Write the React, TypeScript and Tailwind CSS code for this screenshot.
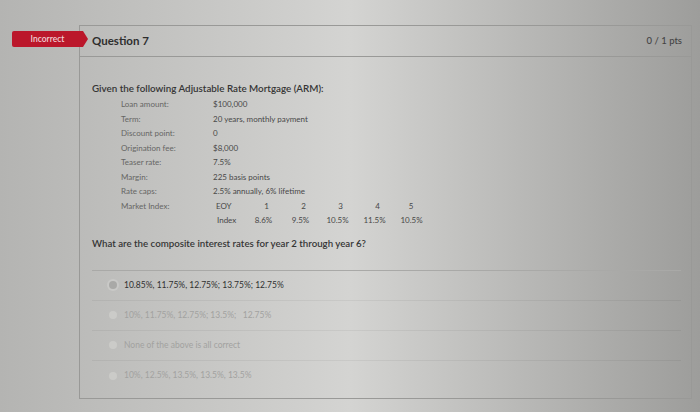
const details: [string, string][] = [
  ["Loan amount:", "$100,000"],
  ["Term:", "20 years, monthly payment"],
  ["Discount point:", "0"],
  ["Origination fee:", "$8,000"],
  ["Teaser rate:", "7.5%"],
  ["Margin:", "225 basis points"],
  ["Rate caps:", "2.5% annually, 6% lifetime"],
];

const eoy = ["1", "2", "3", "4", "5"];
const index = ["8.6%", "9.5%", "10.5%", "11.5%", "10.5%"];

const answers = [
  { text: "10.85%, 11.75%, 12.75%; 13.75%; 12.75%", picked: true },
  { text: "10%, 11.75%, 12.75%; 13.5%;   12.75%", picked: false },
  { text: "None of the above is all correct", picked: false },
  { text: "10%, 12.5%, 13.5%, 13.5%, 13.5%", picked: false },
];

export default function App() {
  return (
    <div
      className="relative h-[412px] w-[700px] overflow-hidden bg-linear-to-r from-[#b4b4b2] via-[#d4d4d2] to-[#9d9d9b] pt-[25px] pl-[79px] pr-[8px] font-['Lato','Noto_Sans',sans-serif]"
    >
      {/* badge sits over the card edge */}
      <div className="absolute left-[12px] top-[31px] flex h-[16px] items-center">
        <div className="flex h-full w-[71px] items-center justify-center rounded-l-[2px] bg-[#bb172b] text-[8.5px] font-semibold text-[#efd0d4]">
          Incorrect
        </div>
        <div className="h-0 w-0 border-y-[8px] border-l-[5px] border-y-transparent border-l-[#bb172b]" />
      </div>

      <div className="h-[374px] border border-[#999997]">
        <div className="flex h-[31px] items-center justify-between border-b border-[#999997] pl-[12px] pr-[9px]">
          <span className="text-[11.5px] font-bold text-[#2e2e2e]">Question 7</span>
          <span className="text-[9.5px] font-medium text-[#444444]">0 / 1 pts</span>
        </div>

        <div className="pl-[12px] pr-[10px] pt-[24px]">
          <p className="text-[9.8px] leading-[14px] font-semibold text-[#353535]">
            Given the following Adjustable Rate Mortgage (ARM):
          </p>

          <div className="mt-[2px] ml-[29px] text-[8px] leading-[14.5px]">
            {details.map(([label, value]) => (
              <div key={label} className="flex">
                <span className="w-[92px] text-[#666664]">{label}</span>
                <span className="text-[#484848]">{value}</span>
              </div>
            ))}
            <div className="flex">
              <span className="w-[95px] text-[#666664]">Market Index:</span>
              <div className="flex text-[#484848]">
                <span className="w-[32px]">EOY</span>
                {eoy.map((n, i) => (
                  <span key={n} className={i === 4 ? "w-[30px] text-center" : "w-[37px] text-center"}>
                    {n}
                  </span>
                ))}
              </div>
            </div>
            <div className="flex">
              <span className="w-[96px]" />
              <div className="flex text-[#484848]">
                <span className="w-[28px]">Index</span>
                {index.map((n, i) => (
                  <span key={i} className="w-[37px] text-center">
                    {n}
                  </span>
                ))}
              </div>
            </div>
          </div>

          <p className="mt-[8px] text-[9.7px] leading-[14px] font-semibold text-[#353535]">
            What are the composite interest rates for year 2 through year 6?
          </p>

          <div className="mt-[20px] border-t border-[#a9a9a7]">
            {answers.map((a) => (
              <div
                key={a.text}
                className="flex h-[30px] items-center border-b border-black/5 last:border-b-0"
              >
                <span
                  className={
                    a.picked
                      ? "ml-[17px] h-[8px] w-[8px] rounded-full bg-[#a9a9a7] ring-2 ring-[#c9c9c7]"
                      : "ml-[17px] h-[8px] w-[8px] rounded-full bg-[#d3d3d1]/60"
                  }
                />
                <span
                  className={
                    a.picked
                      ? "ml-[7px] whitespace-pre text-[8.5px] text-[#303030]"
                      : "ml-[7px] whitespace-pre text-[8.5px] text-[#a2a2a0]"
                  }
                >
                  {a.text}
                </span>
              </div>
            ))}
          </div>
        </div>
      </div>
    </div>
  );
}
